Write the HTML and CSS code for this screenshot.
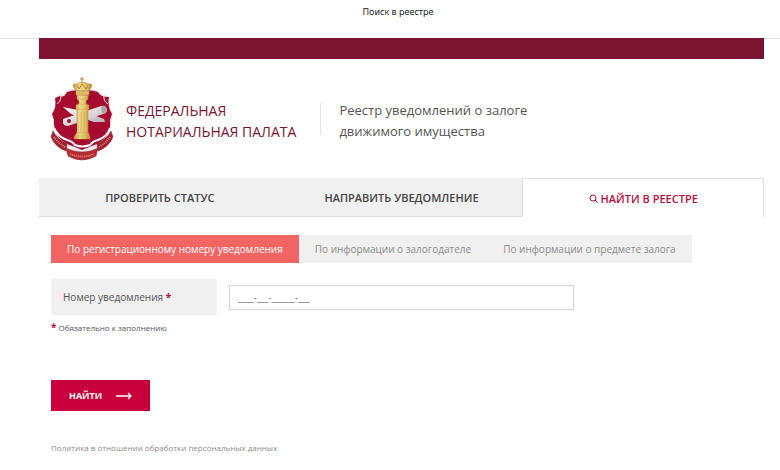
FILE: index.html
```
<!DOCTYPE html>
<html lang="ru">
<head>
    <meta charset="UTF-8">
    <meta name="viewport" content="width=device-width, initial-scale=1.0">
    <title>Поиск в реестре</title>
    <link rel="stylesheet" href="styles.css">
</head>
<body>
    <div class="page-title">Поиск в реестре</div>

    <div class="container">
        <div class="top-bar"></div>

        <!-- Logo and registry name -->
        <header class="header">
            <svg class="logo" viewBox="0 0 66 86" role="img" aria-label="Федеральная нотариальная палата">
                <defs>
                    <linearGradient id="gold" x1="0" x2="1">
                        <stop offset="0" stop-color="#c89c48"/>
                        <stop offset="0.35" stop-color="#f0d98c"/>
                        <stop offset="0.65" stop-color="#e6c56c"/>
                        <stop offset="1" stop-color="#b98a38"/>
                    </linearGradient>
                    <linearGradient id="silver" x1="0" x2="1" y1="0" y2="1">
                        <stop offset="0" stop-color="#fff"/>
                        <stop offset="1" stop-color="#b9b4b7"/>
                    </linearGradient>
                </defs>
                <!-- shield -->
                <path d="M5 23L11 17Q14 20 17 14Q25 11 33 13Q42 11 49 14Q52 20 56 18L62 22Q59 29 64 38Q63 46 61 51Q60 70 33 77Q6 70 5 51Q3 46 3 38Q7 30 5 23Z" fill="#f1eced"/>
                <path d="M6 22L11 20Q15 22 18 16Q26 13 33 15Q41 13 49 16Q51 21 60 21Q58 30 63 38L61 44Q63 60 48 68Q40 71 33 74Q26 71 18 68Q4 60 5 44L3 38Q8 31 6 22Z" fill="#a80b30"/>
                <path d="M12 20Q12 26 8 28M55 19Q54 25 59 28" fill="none" stroke="#f1dfe4" stroke-width="1"/>
                <path d="M5 52Q9 61 18 64Q23 65 26 69Q33 72 41 69Q44 65 49 64Q58 61 61 52" fill="none" stroke="#fff" stroke-width="2"/>
                <!-- crossed quill and scroll -->
                <path d="M14 31L34 35L55 43L56 46L45 46L22 38Z" fill="url(#silver)"/>
                <path d="M14 43L52 30Q57 29 58 34Q58 37 54 38L19 50Q15 50 14 47Z" fill="url(#silver)"/>
                <path d="M53 30Q57 29 58 34Q57 37 54 38Q51 34 53 30Z" fill="#aaa3a7"/>
                <circle cx="20" cy="45" r="2" fill="#a80b30"/>
                <!-- ribbon -->
                <path d="M4 55Q8 63 18 68L17 75Q6 71 2 61ZM62 55Q58 63 48 68L49 75Q60 71 64 61Z" fill="#a51f30" stroke="#742030" stroke-width="0.5"/>
                <path d="M17 72Q33 80 49 72L47 80Q33 88 19 80Z" fill="#b52b31" stroke="#842232" stroke-width="0.5"/>
                <path d="M5 61Q9 67 16 71M61 61Q57 67 50 71M21 78Q33 83 45 78" fill="none" stroke="#dd8c79" stroke-width="2" stroke-dasharray="1 1"/>
                <!-- column -->
                <path d="M28 19H39V23L37 25V28L40 29V33L39 35V56L40 58L41 61V63H25V61L27 58L28 56V35L27 33V29L30 28V25L28 23Z" fill="url(#gold)" stroke="#b98d3d" stroke-width="0.5"/>
                <path d="M28 23H39M29 28H38M27 33H40M28 57H39M26 60H40M32 36V56M35 36V56" fill="none" stroke="#c39a48" stroke-width="0.5"/>
                <path d="M27 15L24 10Q24 7 28 8Q30 5 33 7Q37 5 39 8Q43 7 43 10L40 15Z" fill="url(#gold)" stroke="#a17a35" stroke-width="0.5"/>
                <path d="M28 9L30 13L33 8L37 13L39 9M33 1V7M31 3H35" fill="none" stroke="#b28a40" stroke-width="1"/>
                <path d="M27 15H40V19H27Z" fill="#e0bd68" stroke="#b98d3d" stroke-width="0.5"/>
            </svg>
            <div class="brand">Федеральная<br>нотариальная палата</div>
            <h1 class="registry-name">Реестр уведомлений о залоге<br>движимого имущества</h1>
        </header>

        <!-- Main sections -->
        <nav class="tabs">
            <a class="tab" href="#">Проверить статус</a>
            <a class="tab" href="#">Направить уведомление</a>
            <a class="tab active" href="#">
                <svg class="search-icon" viewBox="0 0 9 9" aria-hidden="true">
                    <circle cx="4" cy="4" r="3"/>
                    <path d="M6 6L8.5 8.5"/>
                </svg>
                Найти в реестре
            </a>
        </nav>

        <main class="content">
            <div class="search-types">
                <button class="search-type active" type="button">По регистрационному номеру уведомления</button>
                <button class="search-type" type="button">По информации о залогодателе</button>
                <button class="search-type" type="button">По информации о предмете залога</button>
            </div>

            <form>
                <div class="field">
                    <label class="field-label" for="number">Номер уведомления <span class="required">*</span></label>
                    <input class="field-input" type="text" id="number" value="____-___-______-___">
                </div>
                <p class="note"><span class="required">*</span> Обязательно к заполнению</p>
                <button class="submit-button" type="submit">
                    Найти
                    <svg class="arrow-icon" viewBox="0 0 16 8" aria-hidden="true">
                        <path d="M0 4H15M12 1L15 4L12 7"/>
                    </svg>
                </button>
            </form>

            <a class="policy-link" href="#">Политика в отношении обработки персональных данных</a>
        </main>
    </div>
</body>
</html>
```
FILE: styles.css
```
:root {
    --burgundy: #7a1431;
    --crimson: #c8003c;
    --coral: #f26562;
    --gray-bg: #f0f0f0;
    --border: #dedede;
    --text: #555;
    --text-light: #8c8c8c;
}

* {
    margin: 0;
    padding: 0;
    box-sizing: border-box;
}

body {
    font-family: "Open Sans", "Noto Sans", sans-serif;
    font-size: 9px;
    color: var(--text);
    background: #fff;
}

a {
    color: inherit;
    text-decoration: none;
}

button,
input {
    font: inherit;
}

.page-title {
    height: 39px;
    padding-top: 4px;
    padding-left: 16px;
    border-bottom: 1px solid #e8e4e5;
    font-family: "Noto Sans", sans-serif;
    line-height: 16px;
    color: #222;
    text-align: center;
}

.container {
    margin: -1px 16px 0 39px;
}

.top-bar {
    height: 21px;
    background: var(--burgundy);
}

.header {
    display: flex;
    align-items: center;
    height: 119px;
    padding-left: 10px;
    line-height: 21px;
}

.logo {
    width: 66px;
    height: 86px;
}

.brand {
    padding-top: 4px;
    margin-left: 11px;
    font-size: 14px;
    color: var(--burgundy);
    text-transform: uppercase;
}

.registry-name {
    padding-top: 4px;
    margin-left: 24px;
    font-size: 13px;
    font-weight: 400;
}

.registry-name::before {
    content: "";
    float: left;
    height: 32px;
    margin: 3px 18px 0 0;
    border-left: 1px solid #e4e4e4;
}

.tabs {
    display: grid;
    grid-template-columns: repeat(3, 1fr);
    height: 39px;
}

.tab {
    display: flex;
    align-items: center;
    justify-content: center;
    gap: 3px;
    background: var(--gray-bg);
    border-bottom: 1px solid var(--border);
    font-size: 11px;
    font-weight: 600;
    color: #444;
    text-transform: uppercase;
}

.tab.active {
    background: #fff;
    border: 1px solid var(--border);
    border-bottom: none;
    color: #b80f3d;
}

.search-icon {
    width: 9px;
    height: 9px;
    fill: none;
    stroke: currentColor;
}

.content {
    padding: 18px 12px;
}

.search-types {
    display: inline-flex;
    height: 28px;
    background: var(--gray-bg);
    vertical-align: top;
}

.search-type {
    padding: 0 16px;
    background: none;
    border: none;
    font-size: 10px;
    color: var(--text-light);
    cursor: pointer;
}

.search-type.active {
    background: var(--coral);
    color: #fff;
}

.field {
    display: flex;
    align-items: center;
    gap: 12px;
    margin-top: 16px;
}

.field-label {
    width: 166px;
    padding: 0 12px;
    background: var(--gray-bg);
    font-size: 10px;
    line-height: 36px;
}

.required {
    font-size: 10px;
    font-weight: 700;
    color: #b80f3d;
}

.field-input {
    flex: 0 1 345px;
    height: 25px;
    padding: 0 8px;
    border: 1px solid #d4d4d4;
    color: var(--text);
}

.note {
    margin-top: 4px;
    font-size: 8px;
    line-height: 16px;
}

.submit-button {
    display: flex;
    align-items: center;
    gap: 14px;
    height: 31px;
    margin-top: 44px;
    padding: 0 18px;
    background: var(--crimson);
    border: none;
    font-weight: 700;
    color: #fff;
    text-transform: uppercase;
    cursor: pointer;
}

.arrow-icon {
    width: 16px;
    height: 8px;
    fill: none;
    stroke: currentColor;
    stroke-width: 1.3;
}

.policy-link {
    display: block;
    margin-top: 29px;
    font-size: 8px;
    line-height: 16px;
    color: var(--text-light);
}
```
